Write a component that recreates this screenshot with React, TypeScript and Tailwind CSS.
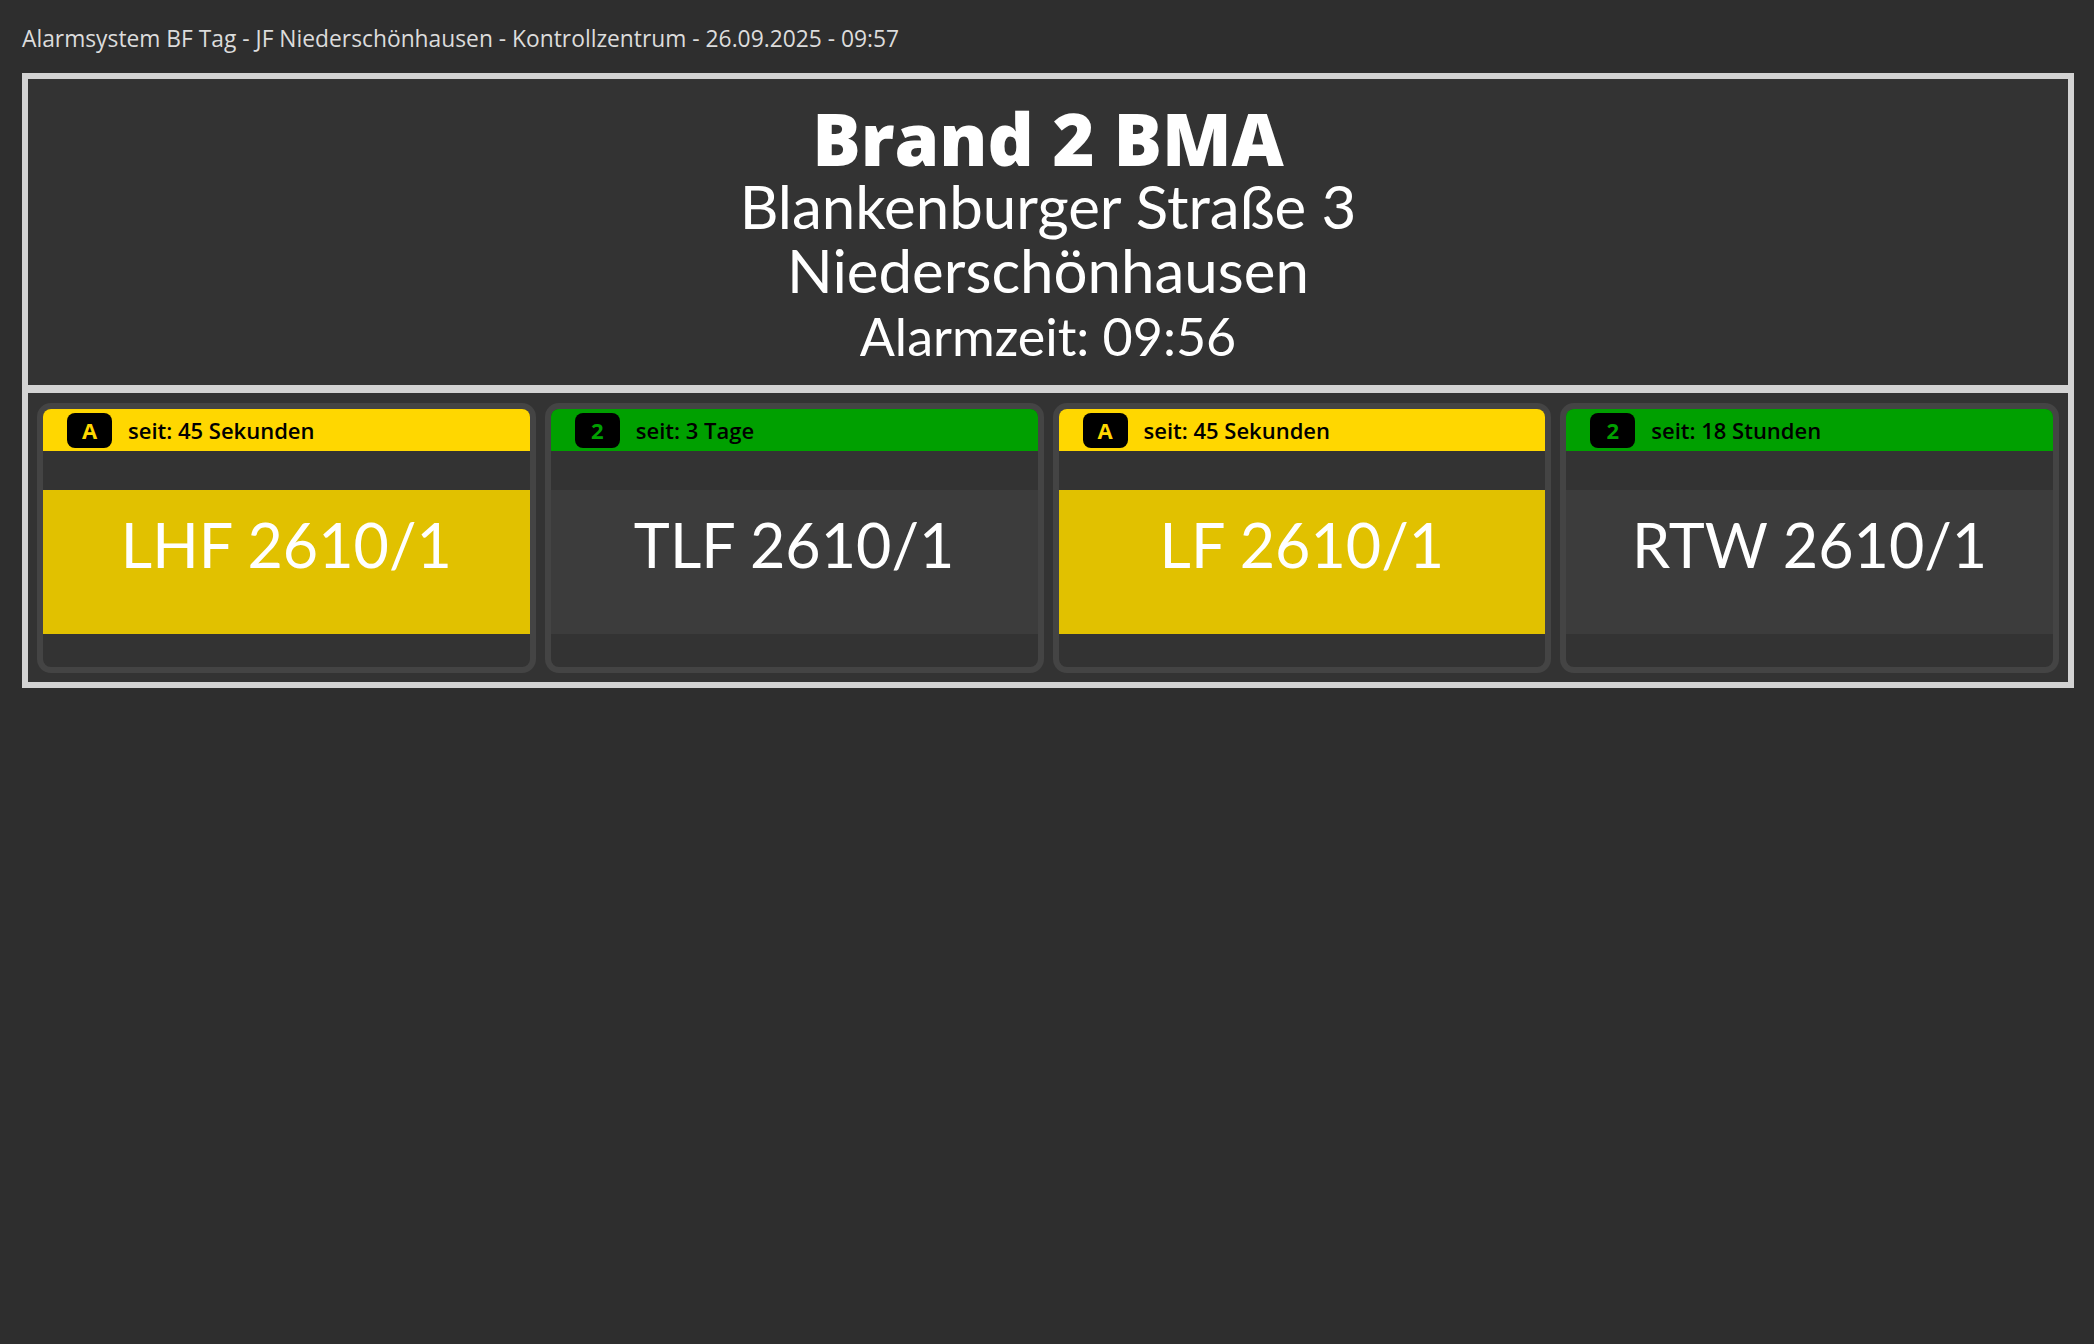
type Unit = {
  name: string;
  status: 'A' | '2';
  since: string;
};

const UNITS: Unit[] = [
  { name: 'LHF 2610/1', status: 'A', since: 'seit: 45 Sekunden' },
  { name: 'TLF 2610/1', status: '2', since: 'seit: 3 Tage' },
  { name: 'LF 2610/1', status: 'A', since: 'seit: 45 Sekunden' },
  { name: 'RTW 2610/1', status: '2', since: 'seit: 18 Stunden' },
];

function UnitCard({ unit }: { unit: Unit }) {
  const alarmed = unit.status === 'A';
  return (
    <div className="flex flex-col overflow-hidden rounded-[14px] border-[6px] border-[#444444] bg-[#333333]">
      <div
        className={
          alarmed
            ? 'flex h-[42px] items-center gap-[16px] bg-[#ffd700] pl-[24px]'
            : 'flex h-[42px] items-center gap-[16px] bg-[#00a000] pl-[24px]'
        }
      >
        <span
          className={
            alarmed
              ? 'flex h-[35px] w-[45px] items-center justify-center rounded-[8px] bg-black text-[22px] font-bold text-[#ffd700]'
              : 'flex h-[35px] w-[45px] items-center justify-center rounded-[8px] bg-black text-[22px] font-bold text-[#00a000]'
          }
        >
          {unit.status}
        </span>
        <span className="text-[22px] font-semibold text-black">{unit.since}</span>
      </div>
      <div className="h-[39px]" />
      <div
        className={
          alarmed
            ? 'h-[144px] bg-[#e1c100] pt-[24px] text-center font-[Lato,sans-serif] text-[61px] leading-none text-white'
            : 'h-[144px] bg-[#3c3c3c] pt-[24px] text-center font-[Lato,sans-serif] text-[61px] leading-none text-white'
        }
      >
        {unit.name}
      </div>
      <div className="h-[33px]" />
    </div>
  );
}

export default function App() {
  return (
    <div className="min-h-screen bg-[#2e2e2e] pb-8 font-['Open_Sans',sans-serif]">
      <div className="pl-[22px] pt-[22px] text-[22.8px] text-[#dcdcdc]">
        Alarmsystem BF Tag - JF Niederschönhausen - Kontrollzentrum - 26.09.2025 - 09:57
      </div>

      <div className="ml-[22px] mr-[20px] mt-[17px] border-[6px] border-[#d3d3d3] bg-[#333333]">
        <div className="flex h-[314px] flex-col items-center border-b-[8px] border-[#d3d3d3] pt-[23px] text-white">
          <div className="text-[72px] font-extrabold leading-[72px]">Brand 2 BMA</div>
          <div className="font-[Lato,sans-serif] text-[60px] leading-[64px]">Blankenburger Straße 3</div>
          <div className="font-[Lato,sans-serif] text-[60px] leading-[64px]">Niederschönhausen</div>
          <div className="font-[Lato,sans-serif] text-[52px] leading-[68px]">Alarmzeit: 09:56</div>
        </div>

        <div className="grid grid-cols-4 gap-[9px] px-[9px] pb-[9px] pt-[10px]">
          {UNITS.map((u) => (
            <UnitCard key={u.name} unit={u} />
          ))}
        </div>
      </div>
    </div>
  );
}
